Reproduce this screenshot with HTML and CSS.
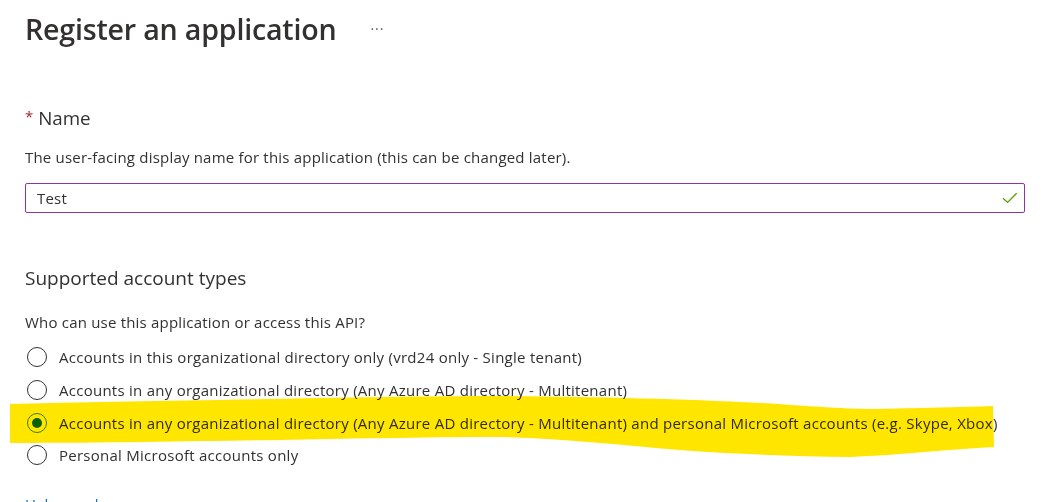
FILE: index.html
```html
<!DOCTYPE html>
<html lang="en">
<head>
  <meta charset="UTF-8" />
  <title>Register an application</title>
  <link rel="stylesheet" href="styles.css">
</head>
<body>
  <div class="page">
    <div class="title-row">
      <h1>Register an application</h1>
      <span class="more">&middot;&middot;&middot;</span>
    </div>

    <label class="field-label" for="appName"><span class="req">*</span> Name</label>
    <p class="desc">The user-facing display name for this application (this can be changed later).</p>
    <div class="input-box">
      <input type="text" id="appName" value="Test" />
      <svg class="check" width="16" height="12" viewBox="0 0 16 12">
        <path d="M1 6.2 L5.6 10.4 L14.6 1.2" fill="none" stroke="#57a300" stroke-width="1.4" />
      </svg>
    </div>

    <h2 class="section-title">Supported account types</h2>
    <p class="desc question">Who can use this application or access this API?</p>

    <div class="radio-group">
      <label class="radio-row"><span class="radio"></span>Accounts in this organizational directory only (vrd24 only - Single tenant)</label>
      <label class="radio-row"><span class="radio"></span>Accounts in any organizational directory (Any Azure AD directory - Multitenant)</label>
      <label class="radio-row"><span class="radio checked"></span>Accounts in any organizational directory (Any Azure AD directory - Multitenant) and personal Microsoft accounts (e.g. Skype, Xbox)</label>
      <label class="radio-row"><span class="radio"></span>Personal Microsoft accounts only</label>
    </div>

    <a class="help" href="#">Help me choose...</a>
  </div>

  <!-- marker scribble over the chosen option -->
  <svg class="marker" width="1041" height="502" viewBox="0 0 1041 502">
    <path d="M10 404 C 80 402, 150 401, 220 400 C 320 398, 420 396, 500 396 C 600 397, 680 399, 760 403 C 810 406, 840 409, 870 409 C 920 408, 960 407, 993 406 L 994 447 C 950 449, 900 455, 850 457 C 790 456, 730 454, 680 450 C 620 445, 560 438, 500 437 C 420 437, 340 439, 280 440 C 200 441, 120 443, 10 443 Z" fill="#ffe600" />
  </svg>
</body>
</html>
```

FILE: styles.css
```css
body {
  margin: 0;
  font-family: 'Open Sans', 'Noto Sans', sans-serif;
  color: #323130;
  background: #fff;
  overflow: hidden;
}
.page {
  padding: 0 16px 0 25px;
}
.title-row {
  display: flex;
  align-items: center;
  height: 56px;
}
h1 {
  margin: 0;
  font-size: 28.6px;
  font-weight: 600;
  letter-spacing: -0.2px;
}
.more {
  margin-left: 34px;
  font-size: 14px;
  letter-spacing: 1px;
  color: #605e5c;
}
.field-label {
  display: block;
  margin-top: 48px;
  font-size: 18.8px;
  line-height: 24px;
}
.req {
  color: #a4262c;
  font-size: 15px;
  vertical-align: 3px;
}
.desc {
  margin: 17px 0 0;
  font-size: 15px;
  letter-spacing: 0.2px;
  line-height: 20px;
}
.input-box {
  display: flex;
  align-items: center;
  margin-top: 16px;
  height: 30px;
  width: 1000px;
  box-sizing: border-box;
  border: 1px solid #8a36a8;
  border-radius: 2px;
  padding: 0 6px 0 11px;
}
.input-box input {
  flex: 1;
  border: none;
  outline: none;
  padding: 0;
  font-family: inherit;
  font-size: 15px;
  letter-spacing: 0.2px;
  color: #323130;
  background: transparent;
}
.check {
  display: block;
}
.section-title {
  margin: 53px 0 0;
  font-size: 19px;
  font-weight: 400;
  line-height: 24px;
}
.question {
  margin-top: 22px;
}
.radio-group {
  margin-top: 9px;
}
.radio-row {
  display: flex;
  align-items: center;
  height: 32.7px;
  font-size: 15px;
  letter-spacing: 0.26px;
  white-space: nowrap;
}
.radio {
  width: 20px;
  height: 20px;
  box-sizing: border-box;
  border: 1px solid #323130;
  border-radius: 50%;
  margin: 0 12px 0 2px;
  flex-shrink: 0;
  display: flex;
  align-items: center;
  justify-content: center;
}
.radio.checked {
  border-color: #3a8a10;
}
.radio.checked::after {
  content: "";
  width: 10px;
  height: 10px;
  border-radius: 50%;
  background: #0b6a0b;
}
.help {
  display: inline-block;
  margin-top: 22px;
  font-size: 15px;
  color: #0078d4;
  text-decoration: none;
}
.marker {
  position: absolute;
  left: 0;
  top: 0;
  pointer-events: none;
  mix-blend-mode: multiply;
}
```
